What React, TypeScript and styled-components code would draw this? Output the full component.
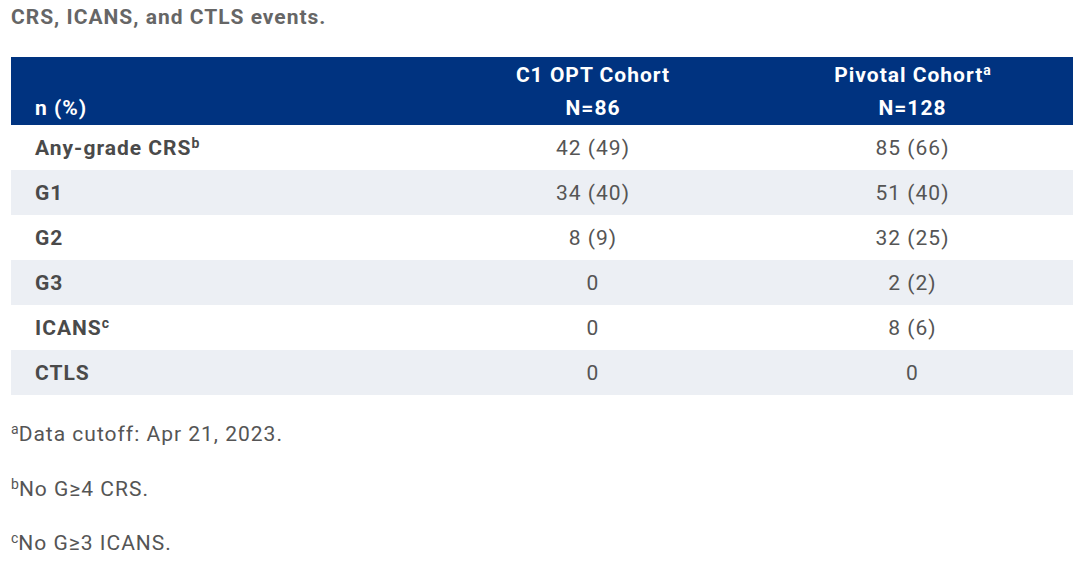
import React from 'react';
import styled, {createGlobalStyle} from 'styled-components';

const GlobalStyle = createGlobalStyle`
  body {
    margin: 0;
    background: #ffffff;
    font-family: Roboto, "Liberation Sans", sans-serif;
    letter-spacing: 1px;
  }
`;

const Page = styled.div`
  padding: 4px 8px 0 11px;
`;

const Title = styled.h3`
  margin: 0 0 27px;
  font-size: 21px;
  line-height: 26px;
  font-weight: 700;
  color: #666666;
`;

const Table = styled.table`
  width: 1062px;
  border-collapse: collapse;
  table-layout: fixed;
  font-size: 21px;
`;

const HeadRow = styled.tr`
  background: #003380;
  color: #ffffff;
`;

const HeadCell = styled.th<{ $align?: 'left' | 'center' }>`
  padding: 2px 0 0 ${p => (p.$align === 'left' ? '24px' : '0')};
  height: 66px;
  line-height: 33px;
  font-weight: 700;
  text-align: ${p => p.$align || 'center'};
  vertical-align: bottom;
`;

const BodyRow = styled.tr<{ $striped?: boolean }>`
  height: 45px;
  background: ${p => (p.$striped ? '#eceff4' : '#ffffff')};
`;

const LabelCell = styled.td`
  padding: 0 0 0 24px;
  font-weight: 700;
  color: #4a4a4a;
`;

const ValueCell = styled.td`
  text-align: center;
  color: #555555;
`;

const Sup = styled.sup`
  font-size: 14px;
  line-height: 0;
  vertical-align: 7px;
  letter-spacing: 0;
`;

const Notes = styled.div`
  margin-top: 25px;
`;

const Note = styled.p`
  margin: 0 0 26.5px;
  font-size: 21px;
  line-height: 28px;
  color: #555555;
`;

const rows: [string, string | null, string, string][] = [
  ['Any-grade CRS', 'b', '42 (49)', '85 (66)'],
  ['G1', null, '34 (40)', '51 (40)'],
  ['G2', null, '8 (9)', '32 (25)'],
  ['G3', null, '0', '2 (2)'],
  ['ICANS', 'c', '0', '8 (6)'],
  ['CTLS', null, '0', '0'],
];

export default function App() {
  return (
    <>
      <GlobalStyle />
      <Page>
        <Title>CRS, ICANS, and CTLS events.</Title>
        <Table>
          <colgroup>
            <col style={{width: 423}} />
            <col style={{width: 318}} />
            <col style={{width: 321}} />
          </colgroup>
          <thead>
            <HeadRow>
              <HeadCell $align="left">n (%)</HeadCell>
              <HeadCell>C1 OPT Cohort<br />N=86</HeadCell>
              <HeadCell>Pivotal Cohort<Sup>a</Sup><br />N=128</HeadCell>
            </HeadRow>
          </thead>
          <tbody>
            {rows.map(([label, sup, c1, piv], i) => (
              <BodyRow key={label} $striped={i % 2 === 1}>
                <LabelCell>{label}{sup && <Sup>{sup}</Sup>}</LabelCell>
                <ValueCell>{c1}</ValueCell>
                <ValueCell>{piv}</ValueCell>
              </BodyRow>
            ))}
          </tbody>
        </Table>
        <Notes>
          <Note><Sup>a</Sup>Data cutoff: Apr 21, 2023.</Note>
          <Note><Sup>b</Sup>No G≥4 CRS.</Note>
          <Note><Sup>c</Sup>No G≥3 ICANS.</Note>
        </Notes>
      </Page>
    </>
  );
}
